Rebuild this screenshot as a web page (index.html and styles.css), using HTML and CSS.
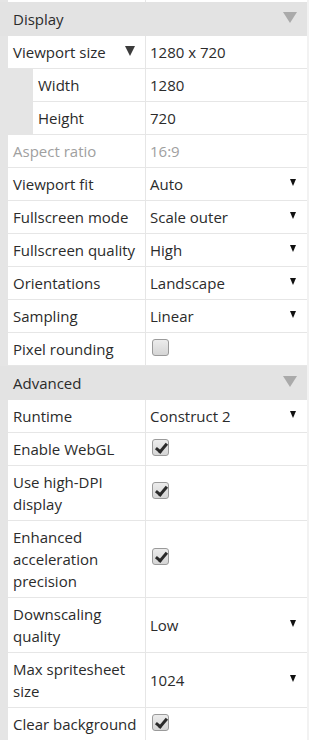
FILE: index.html
```html
<!DOCTYPE html>
<html lang="en">
<head>
    <meta charset="UTF-8">
    <title>Project Properties</title>
    <link rel="stylesheet" href="styles.css">
</head>
<body>
<div class="panel">
    <!-- tail of the row above, scrolled out of view -->
    <div class="row stub"><div class="label"></div><div class="value"></div></div>

    <div class="section">Display <span class="section-arrow"></span></div>

    <div class="row">
        <div class="label toggle">Viewport size <span class="toggle-arrow"></span></div>
        <div class="value">1280 x 720</div>
    </div>
    <div class="row sub">
        <div class="label">Width</div>
        <div class="value">1280</div>
    </div>
    <div class="row sub">
        <div class="label">Height</div>
        <div class="value">720</div>
    </div>
    <div class="row disabled">
        <div class="label">Aspect ratio</div>
        <div class="value">16:9</div>
    </div>
    <div class="row">
        <div class="label">Viewport fit</div>
        <div class="value select">Auto <span class="drop"></span></div>
    </div>
    <div class="row">
        <div class="label">Fullscreen mode</div>
        <div class="value select">Scale outer <span class="drop"></span></div>
    </div>
    <div class="row">
        <div class="label">Fullscreen quality</div>
        <div class="value select">High <span class="drop"></span></div>
    </div>
    <div class="row">
        <div class="label">Orientations</div>
        <div class="value select">Landscape <span class="drop"></span></div>
    </div>
    <div class="row">
        <div class="label">Sampling</div>
        <div class="value select">Linear <span class="drop"></span></div>
    </div>
    <div class="row">
        <div class="label">Pixel rounding</div>
        <div class="value"><span class="check"></span></div>
    </div>

    <div class="section">Advanced <span class="section-arrow"></span></div>

    <div class="row">
        <div class="label">Runtime</div>
        <div class="value select">Construct 2 <span class="drop"></span></div>
    </div>
    <div class="row">
        <div class="label">Enable WebGL</div>
        <div class="value"><span class="check checked"></span></div>
    </div>
    <div class="row">
        <div class="label">Use high-DPI display</div>
        <div class="value middle"><span class="check checked"></span></div>
    </div>
    <div class="row">
        <div class="label">Enhanced acceleration precision</div>
        <div class="value middle"><span class="check checked"></span></div>
    </div>
    <div class="row">
        <div class="label">Downscaling quality</div>
        <div class="value select">Low <span class="drop"></span></div>
    </div>
    <div class="row">
        <div class="label">Max spritesheet size</div>
        <div class="value select">1024 <span class="drop"></span></div>
    </div>
    <div class="row">
        <div class="label">Clear background</div>
        <div class="value"><span class="check checked"></span></div>
    </div>
</div>
</body>
</html>
```

FILE: styles.css
```css
body {
    margin: 0;
    background-color: #f2f2f2;
    font-family: "Open Sans", "Noto Sans", sans-serif;
    font-size: 15px;
    color: #2b2b2b;
}

.panel {
    width: 307px;
    background-color: #e5e5e5;
    overflow: hidden;
}

/* Section headers (Display, Advanced) */
.section {
    display: flex;
    justify-content: space-between;
    align-items: center;
    height: 34px;
    padding: 0 10px 0 13px;
    background-color: #e3e3e3;
    line-height: 22px;
}

.section-arrow {
    width: 0;
    height: 0;
    border-left: 7.5px solid transparent;
    border-right: 7.5px solid transparent;
    border-top: 11px solid #aaaaaa;
    margin-top: -3px;
}

/* Property rows */
.row {
    display: grid;
    grid-template-columns: 138px 1fr;
    margin-left: 8px;
    line-height: 22px;
}

.row .label,
.row .value {
    background-color: #fff;
    border-bottom: 1px solid #e6e6e6;
    padding: 5px 5px 5px 5px;
}

.row .label {
    border-right: 1px solid #e6e6e6;
}

.row .value {
    padding-left: 4px;
    padding-right: 11px;
}

.stub .label,
.stub .value {
    height: 2px;
    padding: 0;
    border-bottom: none;
}

.sub .label {
    margin-left: 25px;
}

.disabled {
    color: #a0a0a0;
}

.toggle {
    display: flex;
    justify-content: space-between;
    align-items: center;
    padding-right: 10px !important;
}

.toggle-arrow {
    width: 0;
    height: 0;
    border-left: 5px solid transparent;
    border-right: 5px solid transparent;
    border-top: 10px solid #3c3c3c;
    margin-top: -2px;
}

.select {
    display: flex;
    justify-content: space-between;
    align-items: center;
}

.drop {
    width: 0;
    height: 0;
    border-left: 3px solid transparent;
    border-right: 3px solid transparent;
    border-top: 7px solid #111;
    margin-top: -4px;
}

.middle {
    display: flex;
    align-items: center;
}

/* Checkbox look */
.check {
    display: inline-block;
    position: relative;
    box-sizing: border-box;
    width: 17px;
    height: 17px;
    margin-left: 2px;
    vertical-align: -1px;
    border: 1px solid #9a9a9a;
    border-radius: 3px;
    background: linear-gradient(#ececec, #d5d5d5);
}

.middle .check {
    margin-top: -6px;
}

.check.checked::after {
    content: "";
    position: absolute;
    left: 5px;
    top: 1px;
    width: 4px;
    height: 9px;
    border: solid #2a2a2a;
    border-width: 0 3px 3px 0;
    transform: rotate(40deg);
}
```
